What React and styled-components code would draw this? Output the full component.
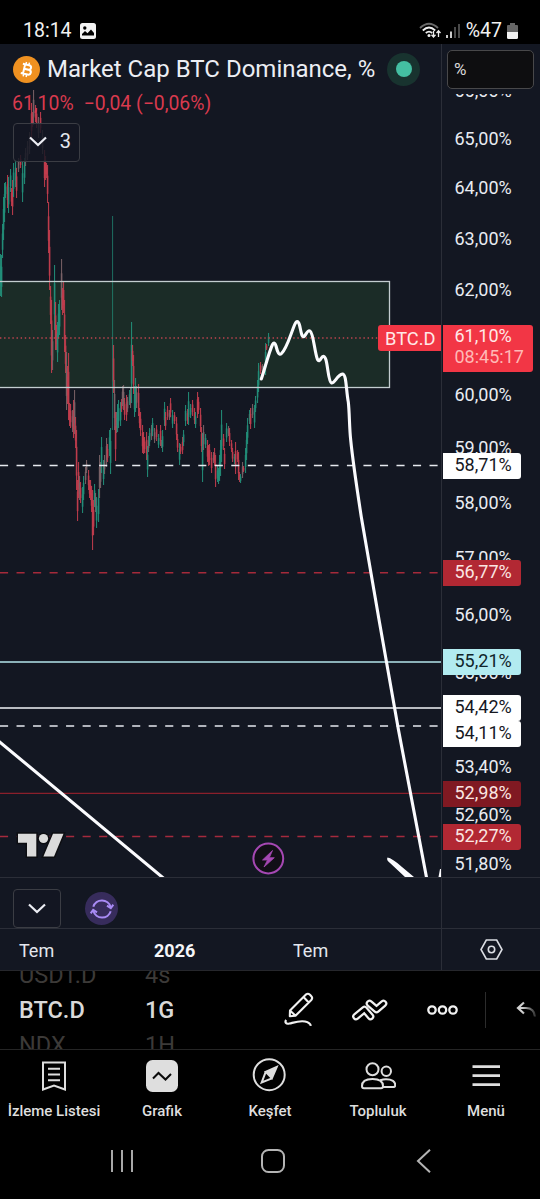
import React, { memo } from "react";
import styled, { createGlobalStyle } from "styled-components";

const GlobalStyle = createGlobalStyle`
  * {
    box-sizing: border-box;
  }
  body {
    margin: 0;
    background: #000000;
    font-family: Roboto, "Liberation Sans", sans-serif;
    overflow: hidden;
  }
  svg {
    display: block;
    flex: none;
  }
`;

const UP = "#22917b";
const DOWN = "#c43d4e";
const MIX = "#7d6468";
const CHART_TOP = 44;

// x, high, low, side (u = up, d = down, m = mixed)
const candles = [
  [0, 254, 296, "u"], [1, 255, 297, "u"], [2, 224, 258, "u"], [3, 197, 240, "u"], [4, 183, 222, "u"],
  [5, 182, 198, "u"], [7, 175, 208, "d"], [8, 177, 213, "u"], [10, 169, 192, "u"], [11, 188, 206, "d"],
  [12, 180, 215, "d"], [13, 163, 197, "u"], [15, 160, 187, "u"], [16, 168, 198, "d"], [18, 158, 172, "m"],
  [20, 155, 168, "d"], [22, 162, 202, "u"], [24, 158, 184, "u"], [25, 148, 166, "m"], [27, 141, 160, "m"],
  [29, 132, 154, "m"], [31, 103, 140, "d"], [32, 112, 127, "d"], [33, 90, 125, "m"], [35, 105, 122, "d"],
  [36, 108, 128, "d"], [38, 117, 138, "m"], [40, 112, 133, "d"], [42, 130, 154, "m"], [44, 150, 187, "d"],
  [45, 156, 180, "d"], [46, 163, 178, "d"], [47, 165, 203, "d"], [48, 202, 253, "d"], [49, 230, 290, "d"],
  [50, 286, 324, "d"], [51, 300, 373, "d"], [52, 330, 370, "m"], [54, 265, 330, "u"], [55, 302, 350, "d"],
  [56, 325, 350, "d"], [57, 322, 362, "u"], [58, 304, 338, "u"], [59, 300, 335, "u"], [61, 259, 310, "m"],
  [62, 288, 315, "d"], [63, 281, 313, "d"], [64, 300, 352, "d"], [65, 335, 373, "d"], [66, 352, 410, "m"],
  [67, 366, 404, "d"], [68, 353, 420, "d"], [69, 403, 426, "d"], [70, 404, 428, "d"], [72, 410, 432, "m"],
  [73, 400, 438, "d"], [74, 390, 434, "m"], [75, 417, 448, "d"], [76, 430, 490, "d"], [77, 480, 521, "d"],
  [78, 462, 498, "d"], [79, 476, 500, "m"], [80, 482, 503, "d"], [82, 487, 513, "u"], [83, 476, 500, "u"],
  [85, 467, 484, "m"], [86, 460, 473, "m"], [88, 470, 490, "d"], [89, 480, 498, "d"], [90, 480, 500, "d"],
  [91, 486, 512, "d"], [92, 490, 550, "d"], [93, 500, 535, "d"], [94, 484, 507, "u"], [95, 493, 512, "m"],
  [96, 497, 528, "u"], [98, 489, 522, "u"], [99, 455, 498, "m"], [100, 462, 488, "m"], [101, 437, 473, "u"],
  [103, 460, 485, "u"], [104, 455, 474, "m"], [106, 438, 467, "m"], [107, 444, 462, "d"], [109, 430, 456, "u"],
  [110, 428, 474, "u"], [112, 216, 430, "u"], [113, 345, 393, "d"], [114, 380, 430, "m"], [115, 412, 461, "d"],
  [116, 412, 433, "m"], [117, 404, 432, "u"], [118, 400, 428, "u"], [120, 402, 426, "u"], [121, 399, 412, "d"],
  [122, 386, 406, "m"], [123, 385, 410, "m"], [124, 398, 420, "d"], [126, 395, 421, "d"], [127, 397, 412, "m"],
  [129, 390, 405, "u"], [130, 388, 408, "m"], [131, 322, 403, "u"], [132, 345, 366, "d"], [133, 355, 394, "d"],
  [134, 386, 417, "u"], [135, 378, 412, "u"], [136, 386, 408, "m"], [138, 384, 416, "d"], [139, 408, 428, "d"],
  [140, 412, 436, "d"], [142, 425, 453, "d"], [143, 432, 454, "d"], [144, 437, 453, "d"], [146, 432, 460, "d"],
  [147, 446, 477, "u"], [148, 436, 452, "m"], [149, 428, 446, "u"], [151, 425, 440, "m"], [152, 418, 436, "u"],
  [154, 428, 443, "m"], [156, 425, 441, "d"], [158, 434, 448, "u"], [160, 425, 446, "d"], [161, 440, 448, "m"],
  [162, 430, 452, "u"], [164, 402, 426, "u"], [165, 412, 430, "d"], [167, 406, 420, "d"], [169, 410, 420, "m"],
  [170, 398, 417, "d"], [172, 410, 428, "u"], [174, 412, 424, "d"], [176, 417, 440, "d"], [177, 434, 452, "d"],
  [179, 443, 465, "u"], [180, 444, 454, "d"], [182, 437, 454, "d"], [183, 430, 446, "u"], [185, 405, 426, "u"],
  [187, 409, 424, "d"], [188, 392, 425, "u"], [190, 404, 418, "u"], [192, 400, 416, "d"], [194, 408, 424, "d"],
  [195, 412, 428, "u"], [197, 392, 418, "d"], [198, 397, 414, "d"], [200, 408, 432, "d"], [201, 427, 452, "d"],
  [202, 433, 482, "u"], [203, 425, 450, "m"], [205, 434, 448, "u"], [207, 440, 462, "d"], [208, 445, 466, "d"],
  [209, 444, 465, "d"], [211, 452, 473, "d"], [213, 452, 463, "m"], [214, 448, 466, "d"], [215, 455, 487, "d"],
  [217, 466, 482, "u"], [218, 468, 484, "u"], [219, 455, 481, "u"], [220, 440, 476, "u"], [221, 410, 462, "u"],
  [223, 434, 450, "d"], [224, 448, 469, "d"], [226, 423, 442, "u"], [228, 426, 436, "m"], [229, 428, 446, "d"],
  [231, 440, 452, "d"], [232, 448, 462, "d"], [234, 454, 464, "u"], [235, 442, 474, "d"], [237, 450, 462, "d"],
  [238, 452, 480, "d"], [239, 472, 482, "d"], [240, 474, 483, "u"], [242, 462, 478, "m"], [243, 466, 472, "d"],
  [245, 448, 473, "u"], [246, 432, 460, "u"], [247, 418, 444, "u"], [249, 410, 424, "u"], [250, 408, 429, "d"],
  [252, 404, 418, "m"], [254, 405, 428, "u"], [255, 396, 412, "u"], [257, 380, 403, "u"], [258, 363, 392, "u"],
  [260, 362, 374, "d"], [262, 364, 371, "m"], [263, 366, 375, "u"], [265, 343, 375, "u"], [266, 344, 350, "d"],
  [268, 333, 346, "u"],
];

const sideColors = { u: UP, d: DOWN, m: MIX };

const levels = [
  { y: 465.5, color: "#e6e9ef", width: 1.6, dash: "8.1 8.42" },
  { y: 572.7, color: "#a52a3a", width: 1.4, dash: "8.1 8.42" },
  { y: 662, color: "#b4e6ec", width: 1.4 },
  { y: 708, color: "#f2f4f8", width: 1.4 },
  { y: 726, color: "#e6e9ef", width: 1.6, dash: "8.1 8.42" },
  { y: 793.3, color: "#8a1f2b", width: 1.3 },
  { y: 836.5, color: "#a52a3d", width: 1.4, dash: "8.1 8.42" },
];

const ticks = [
  [90.5, "66,00%"], [139, "65,00%"], [188, "64,00%"], [239, "63,00%"], [290, "62,00%"],
  [395, "60,00%"], [448, "59,00%"], [503, "58,00%"], [558, "57,00%"], [615, "56,00%"],
  [672.5, "55,00%"], [767, "53,40%"], [815, "52,60%"], [864, "51,80%"],
];

const tags = [
  { top: 453, label: "58,71%", bg: "#ffffff", fg: "#16181f" },
  { top: 560, label: "56,77%", bg: "#b22833", fg: "#fbe6e2" },
  { top: 649, label: "55,21%", bg: "#b2ebf0", fg: "#10242a" },
  { top: 695, label: "54,42%", bg: "#ffffff", fg: "#16181f" },
  { top: 720.5, label: "54,11%", bg: "#ffffff", fg: "#16181f" },
  { top: 781, label: "52,98%", bg: "#801922", fg: "#fbe6e2" },
  { top: 824, label: "52,27%", bg: "#b22833", fg: "#fbe6e2" },
];

const Screen = styled.div`
  width: 540px;
  height: 1199px;
  display: flex;
  flex-direction: column;
  background: #000000;
`;

const StatusBar = styled.div`
  height: 44px;
  padding: 17px 22px 0 23px;
  display: flex;
  justify-content: space-between;
  color: #f2f2f2;
  font-size: 19.5px;
  line-height: 27px;
`;

const StatusGroup = styled.div`
  display: flex;
  align-items: center;
  height: 27px;
  gap: ${({ $gap }) => $gap}px;
`;

const Workspace = styled.div`
  height: 926px;
  display: grid;
  grid-template-columns: 441px 99px;
  grid-template-rows: 833px 51px 42px;
  background: #131722;
`;

const Pane = styled.div`
  position: relative;
  overflow: hidden;
`;

const Legend = styled.div`
  position: absolute;
  top: 0;
  left: 0;
  width: 100%;
  padding: 10px 0 0 13px;
`;

const TitleRow = styled.div`
  display: flex;
  align-items: center;
  height: 30px;
  color: #eceef4;
  font-size: 24px;
  white-space: nowrap;
`;

const Title = styled.span`
  margin: 0 12px 0 7px;
`;

const MarketStatus = styled.span`
  display: grid;
  place-items: center;
  width: 33px;
  height: 33px;
  border-radius: 50%;
  background: #18332f;

  &::after {
    content: "";
    width: 16px;
    height: 16px;
    border-radius: 50%;
    background: #44bfa2;
  }
`;

const Quote = styled.div`
  display: flex;
  gap: 10px;
  margin: 8px 0 0 -1px;
  height: 24px;
  line-height: 24px;
  font-size: 19.4px;
  color: #d93a4e;
  white-space: nowrap;
`;

const OutlineButton = styled.div`
  display: flex;
  align-items: center;
  justify-content: ${({ $count }) => ($count ? "space-between" : "center")};
  width: ${({ $count }) => ($count ? 67 : 48)}px;
  height: 39px;
  padding: ${({ $count }) => ($count ? "0 8px 3px 15px" : "0")};
  border: 1px solid #3b3d44;
  border-radius: 4px;
  background: rgba(19, 23, 34, 0.84);
  color: #e4e7ee;
  font-size: 20px;
`;

const LegendToggle = styled(OutlineButton)`
  margin-top: 7px;
`;

const SymbolTag = styled.div`
  position: absolute;
  right: 0;
  top: 281px;
  width: 63px;
  height: 26px;
  padding-left: 7px;
  border-radius: 3px 0 0 3px;
  background: #f23645;
  color: #ffe9e8;
  font-size: 18.3px;
  line-height: 27px;
`;

const PriceScale = styled.div`
  position: relative;
  overflow: hidden;
  border-left: 1px solid #2b2e38;
  font-size: 18px;
  color: #e9ecf2;
`;

const Tick = styled.span`
  position: absolute;
  left: 12.5px;
  top: ${({ $y }) => $y - CHART_TOP - 12}px;
  line-height: 24px;
`;

const PriceTag = styled.div`
  position: absolute;
  left: 0.5px;
  top: ${({ $top }) => $top - CHART_TOP}px;
  width: ${({ $wide }) => ($wide ? 90 : 78)}px;
  padding: ${({ $wide }) => ($wide ? "1px" : "0")} 0 ${({ $wide }) => ($wide ? "5px" : "2px")} 12px;
  border-radius: 0 3px 3px 0;
  background: ${({ $bg }) => $bg};
  color: ${({ $fg }) => $fg};
  line-height: ${({ $wide }) => ($wide ? 20.5 : 24)}px;
`;

const Countdown = styled.div`
  color: #ffb9b6;
`;

const UnitHolder = styled.div`
  position: absolute;
  inset: 0 0 auto 0;
  height: 50px;
  padding: 6px 6px 0 5px;
  background: #131722;
`;

const UnitBox = styled.div`
  height: 39px;
  padding-left: 6px;
  border: 1px solid #48484a;
  border-radius: 5px;
  background: #0e0e10;
  font-size: 17px;
  line-height: 37px;
  color: #d8d8da;
`;

const EventStrip = styled.div`
  display: flex;
  align-items: center;
  gap: 24px;
  padding: 11px 0 0 13px;
  border-top: 1px solid #2b2e38;
`;

const SyncBadge = styled.span`
  display: grid;
  place-items: center;
  width: 33px;
  height: 33px;
  border-radius: 50%;
  background: #372c5c;
`;

const TimeAxis = styled.div`
  display: grid;
  grid-template-columns: 135px 139px 1fr;
  align-items: center;
  padding: 1px 0 0 19px;
  border-top: 1px solid #2b2e38;
  color: #e4e7ee;
  font-size: 18px;
`;

const Year = styled.b`
  font-weight: 700;
  color: #f4f5f8;
`;

const Corner = styled.div`
  display: grid;
  place-items: center;
  border-top: 1px solid #2b2e38;
  border-left: 1px solid #2b2e38;
`;

const Toolbar = styled.div`
  height: 80px;
  display: flex;
  align-items: center;
  padding-left: 19px;
  overflow: hidden;
  border-top: 1px solid #26272c;
  border-bottom: 1px solid #252525;
`;

const Wheel = styled.div`
  display: flex;
  flex-direction: column;
  justify-content: center;
  flex: none;
  width: ${({ $width }) => $width}px;
  height: 78px;
  overflow: hidden;
  font-size: 23.5px;
  font-weight: 500;
  line-height: 35px;
  color: #d9d9d9;
`;

const Faded = styled.span`
  font-weight: 400;
  color: #3c3a38;
`;

const Tools = styled.div`
  display: flex;
  align-items: center;
`;

const Spacer = styled.span`
  width: ${({ $width }) => $width}px;
`;

const Divider = styled.span`
  width: 1px;
  height: 36px;
  margin: 0 30px 0 27px;
  background: #2c2c2c;
`;

const TabBar = styled.div`
  height: 80px;
  display: grid;
  grid-template-columns: repeat(5, 108px);
`;

const Tab = styled.div`
  display: flex;
  flex-direction: column;
  align-items: center;
  padding-top: 7px;
  gap: 8px;
  font-size: 15px;
  font-weight: 500;
  line-height: 20px;
  color: #dedede;
  white-space: nowrap;
`;

const SystemNav = styled.div`
  flex: 1;
  display: flex;
  align-items: center;
  gap: 127px;
  padding: 0 0 7px 110px;
`;

const Chevron = () => (
  <svg width="18" height="11" viewBox="0 0 18 11" fill="none" stroke="#eceef4" strokeWidth="2.2">
    <path d="M1 1.5 9 9l8-7.5" />
  </svg>
);

const BitcoinIcon = () => (
  <svg width="27" height="27" viewBox="0 0 27 27">
    <circle cx="13.5" cy="13.5" r="13.5" fill="#ef9121" />
    <g transform="rotate(13 13.5 13.5)" fill="none" stroke="#fff" strokeWidth="2">
      <path d="M8.7 8.8h6.4c3.3 0 3.3 4.5 0 4.5h-4 4.6c3.6 0 3.6 4.9 0 4.9H8.7M11 8.8v9.4" />
      <path d="M11.8 6.2v2.4M14.8 6.2v2.4M11.8 18.5v2.4M14.8 18.5v2.4" strokeWidth="1.5" />
    </g>
  </svg>
);

const Candle = memo(({ x, high, low, side }) => {
  const span = low - high;
  const color = sideColors[side];
  return (
    <g fill={color}>
      <rect x={x} y={high} width="1.1" height={span} opacity={span < 100 ? 0.9 : 0.65} />
      {span < 100 && <rect x={x - 0.3} y={high + span * 0.28} width="1.8" height={span * 0.48} opacity="0.65" />}
    </g>
  );
});

const Chart = () => (
  <svg width="441" height="833" viewBox={`0 ${CHART_TOP} 441 833`}>
    <rect x="-2" y="281.5" width="391.5" height="106" fill="#1b2c27" />
    {candles.map(([x, high, low, side]) => (
      <Candle key={x} x={x} high={high} low={low} side={side} />
    ))}
    <rect x="-2" y="281.5" width="391.5" height="106" fill="none" stroke="#c3cdd0" strokeWidth="1.3" />
    <line x1="0" x2="378" y1="338" y2="338" stroke="#c04450" strokeWidth="1.4" strokeDasharray="1.4 2.73" />
    {levels.map((l) => (
      <line key={l.y} x1="0" x2="441" y1={l.y} y2={l.y} stroke={l.color} strokeWidth={l.width} strokeDasharray={l.dash} />
    ))}
    <g fill="none" stroke="#fbfbfe" strokeWidth="3.1" strokeLinecap="round" strokeLinejoin="round">
      <path d="M261.3 379C265 368 269 352 272.5 344.5Q274.5 341 276 346C277.5 352 279 356 281.5 353.5C287 348 290 336 294.5 325Q297.5 318 299.5 325C301 331 301.5 337.5 304 336.5C306 335 307.5 329.5 310 331C313.5 333 314.5 352 317.5 359.5Q319 362.5 321 358.5Q324 353.5 326 360C328 367 328.5 382 331.5 383C335 383.5 337 375 342.5 374C346.5 374 346 390 348.3 402C349.5 412 349.3 428 350.7 440C352.5 458 357 489 361.3 517L379.6 623L398.5 730L427 880" />
      <path d="M-2 740.5 164.5 879" />
    </g>
    <path d="M387.500 857.500Q386 860 390 863L405 877H414L402 867Q392 858 387.500 857.500ZM440 869L438.500 877H441V869Z" fill="#fbfbfe" />
    <g fill="#dbdbdb" stroke="#0d0e12" strokeWidth="3" paintOrder="stroke">
      <path d="M18 833.700h18.300v22.800h-9.300v-13.700h-9zM53 833.700h10.500l-9.500 22.800h-10.600z" />
      <circle cx="43.500" cy="838.500" r="4.600" />
    </g>
    <circle cx="268.300" cy="858.500" r="14.900" fill="#110f16" stroke="#a548b3" strokeWidth="2" />
    <path d="M272.500 850.500 262.500 860h5l-3.500 7 10.300-9.300h-5z" fill="#a548b3" stroke="#a548b3" strokeWidth=".8" strokeLinejoin="round" />
  </svg>
);

const PhotoIcon = () => (
  <svg width="16" height="16" viewBox="0 0 16 16">
    <rect width="16" height="16" rx="2.5" fill="#f2f2f2" />
    <circle cx="4.8" cy="5" r="1.7" fill="#000" />
    <path d="M2 12.500V11l3-3 2.500 2.300L11 6.500l3 3.500v2.500z" fill="#000" />
  </svg>
);

const StatusIcons = () => (
  <svg width="42" height="20" viewBox="0 0 42 20" fill="none" stroke="#efefef" strokeWidth="1.8">
    <path d="M1 7Q10 -1.500 19 7" stroke="#696969" />
    <path d="M3.800 9.500Q10 3.500 16.200 9.500M6.800 12Q10 9.200 13.200 12" />
    <circle cx="10" cy="14.5" r="1.5" fill="#efefef" stroke="none" />
    <path d="M14.500 10v6M12.500 13.800l2 2.200 2-2.200M19.500 16v-6M17.500 12l2-2.200 2 2.200" strokeWidth="1.3" />
    <path d="M28 14v3M32 10.500v6.500" strokeWidth="1.7" />
    <path d="M36 6v11M40 3v14" stroke="#565656" strokeWidth="1.7" />
  </svg>
);

const BatteryIcon = () => (
  <svg width="11" height="16" viewBox="0 0 11 16">
    <path d="M3 0h5v2h2q1 0 1 1v6H0V3q0-1 1-1h2z" fill="#666" />
    <path d="M0 9h11v5.500q0 1.500-1.500 1.500h-8Q0 16 0 14.500z" fill="#f2f2f2" />
  </svg>
);

const SyncIcon = () => (
  <svg width="24" height="24" viewBox="0 0 24 24" fill="none" stroke="#a98bf5" strokeWidth="2">
    <path d="M3.300 9.800A9 9 0 0 1 20.600 10M20.700 14.200A9 9 0 0 1 3.400 14" />
    <path d="M17 8.700 20.800 11.200 23.300 7.700M.7 16.300 3.200 12.800 7 15.300" />
  </svg>
);

const HexIcon = () => (
  <svg width="23" height="21" viewBox="0 0 23 21" fill="none" stroke="#dcdee4" strokeWidth="1.6">
    <path d="M6.300 1h10.400L22 10.500 16.700 20H6.300L1 10.500z" />
    <circle cx="11.5" cy="10.5" r="3.2" />
  </svg>
);

const PencilIcon = () => (
  <svg width="30" height="36" viewBox="0 0 30 36" fill="none" stroke="#f1f1f1" strokeWidth="2.1" strokeLinejoin="round">
    <path d="M5.800 24.200 6 18.500 22.200 2.300Q24 1 26 2.800L27.300 4.200Q29 6 27.300 8L11.500 23.800zM19.500 5l5.500 5.700M6 18.500l5.500 5.300" />
    <path d="M2.200 28c-1.500 2-.5 4.500 3.300 3.500 6-1.500 10-3 15.500-2 3.500.8 5.500 2.300 5.800 4.300" strokeWidth="2.2" />
  </svg>
);

const ChevronsIcon = () => (
  <svg width="36" height="22" viewBox="0 0 36 22" fill="none" strokeLinecap="round" strokeLinejoin="round">
    <path d="M4 17.500 12.500 10.500 18.500 17.500M17.500 4.500 24.500 10.500 31.500 4.500" stroke="#f1f1f1" strokeWidth="7.6" />
    <path d="M4 17.500 12.500 10.500 18.500 17.500M17.500 4.500 24.500 10.500 31.500 4.500" stroke="#000" strokeWidth="3.2" />
  </svg>
);

const MoreIcon = () => (
  <svg width="31" height="10" viewBox="0 0 31 10" fill="none" stroke="#f1f1f1" strokeWidth="2.3">
    <circle cx="5" cy="5" r="3.7" />
    <circle cx="15.5" cy="5" r="3.7" />
    <circle cx="26" cy="5" r="3.7" />
  </svg>
);

const UndoIcon = () => (
  <svg width="22" height="18" viewBox="0 0 22 18" fill="none" stroke="url(#undoFade)" strokeWidth="2.2">
    <defs>
      <linearGradient id="undoFade" gradientUnits="userSpaceOnUse" x1="6" x2="20" y1="0" y2="0">
        <stop offset="0" stopColor="#d2d2d2" />
        <stop offset="1" stopColor="#2b2b2b" />
      </linearGradient>
    </defs>
    <path d="M8 1.500 2 7l6 5.500M2 7h8c5 0 8.500 3 9 8.500" />
  </svg>
);

const TabIcon = ({ children }) => (
  <svg width="36" height="36" viewBox="0 0 36 36" fill="none" stroke="#dedede" strokeWidth="2">
    {children}
  </svg>
);

const tabs = [
  {
    label: "İzleme Listesi",
    icon: <path d="M7 5.500h22v27l-11-4-11 4zM12 11.800h12M12 17.500h12M12 23.200h12" />,
  },
  {
    label: "Grafik",
    icon: (
      <>
        <rect x="2" y="3" width="32" height="32" rx="6.5" fill="#dedede" stroke="none" />
        <path d="M9 21.500 14.500 16l7 6.500 5.500-5.500" stroke="#0a0a0a" />
      </>
    ),
  },
  {
    label: "Keşfet",
    icon: (
      <>
        <circle cx="17.2" cy="17.7" r="15.5" />
        <path d="M24.700 10 19.900 21.300 13.700 14.800z" fill="#dedede" />
        <path d="M13.700 14.800 9.700 25.500 19.900 21.300" />
      </>
    ),
  },
  {
    label: "Topluluk",
    icon: (
      <>
        <circle cx="12.5" cy="12.3" r="6" />
        <circle cx="26.3" cy="14.3" r="4.7" />
        <path d="M2 29C2 24 6 22 12.500 22S23 24 23 29Q23 31.200 21 31.200H4Q2 31.200 2 29zM20.500 23.300Q23 22.300 26 22.300C32 22.300 35.500 24.500 35.200 28.500Q35 30 33.500 30H22.500" />
      </>
    ),
  },
  {
    label: "Menü",
    icon: <path d="M4.500 9.700h27.500M4.500 18.700h27.500M4.500 27.700h27.500" strokeWidth="2.8" />,
  },
];

const App = () => {
  return (
    <>
      <GlobalStyle />
      <Screen>
        <StatusBar>
          <StatusGroup $gap={8}>
            <span>18:14</span>
            <PhotoIcon />
          </StatusGroup>
          <StatusGroup $gap={5}>
            <StatusIcons />
            <span>%47</span>
            <BatteryIcon />
          </StatusGroup>
        </StatusBar>

        <Workspace>
          <Pane>
            <Chart />
            <Legend>
              <TitleRow>
                <BitcoinIcon />
                <Title>Market Cap BTC Dominance, %</Title>
                <MarketStatus />
              </TitleRow>
              <Quote>
                <span>61,10%</span>
                <span>−0,04 (−0,06%)</span>
              </Quote>
              <LegendToggle $count>
                <Chevron />
                <span>3</span>
              </LegendToggle>
            </Legend>
            <SymbolTag>BTC.D</SymbolTag>
          </Pane>
          <PriceScale>
            {ticks.map(([y, label]) => (
              <Tick key={label} $y={y}>{label}</Tick>
            ))}
            {tags.map((tag) => (
              <PriceTag key={tag.label} $top={tag.top} $bg={tag.bg} $fg={tag.fg}>{tag.label}</PriceTag>
            ))}
            <PriceTag $wide $top={325} $bg="#f23645" $fg="#ffe9e8">
              <div>61,10%</div>
              <Countdown>08:45:17</Countdown>
            </PriceTag>
            <UnitHolder>
              <UnitBox>%</UnitBox>
            </UnitHolder>
          </PriceScale>

          <EventStrip>
            <OutlineButton>
              <Chevron />
            </OutlineButton>
            <SyncBadge>
              <SyncIcon />
            </SyncBadge>
          </EventStrip>
          <Corner />

          <TimeAxis>
            <span>Tem</span>
            <Year>2026</Year>
            <span>Tem</span>
          </TimeAxis>
          <Corner>
            <HexIcon />
          </Corner>
        </Workspace>

        <Toolbar>
          <Wheel $width={126}>
            <Faded>USDT.D</Faded>
            <span>BTC.D</span>
            <Faded>NDX</Faded>
          </Wheel>
          <Wheel $width={139}>
            <Faded>4s</Faded>
            <span>1G</span>
            <Faded>1H</Faded>
          </Wheel>
          <Tools>
            <PencilIcon />
            <Spacer $width={38} />
            <ChevronsIcon />
            <Spacer $width={39} />
            <MoreIcon />
            <Divider />
            <UndoIcon />
          </Tools>
        </Toolbar>

        <TabBar>
          {tabs.map((tab) => (
            <Tab key={tab.label}>
              <TabIcon>{tab.icon}</TabIcon>
              <span>{tab.label}</span>
            </Tab>
          ))}
        </TabBar>

        <SystemNav>
          <svg width="24" height="24" viewBox="0 0 24 24" stroke="#a8a8a8" strokeWidth="2">
            <path d="M2 1v22M12 1v22M22 1v22" />
          </svg>
          <svg width="24" height="24" viewBox="0 0 24 24" fill="none" stroke="#b4b4b4" strokeWidth="2">
            <rect x="1" y="1" width="22" height="22" rx="6.5" />
          </svg>
          <svg width="24" height="24" viewBox="-4 0 24 24" fill="none" stroke="#b4b4b4" strokeWidth="2">
            <path d="M14 .8 2 12l12 11.200" />
          </svg>
        </SystemNav>
      </Screen>
    </>
  );
};

export default App;
